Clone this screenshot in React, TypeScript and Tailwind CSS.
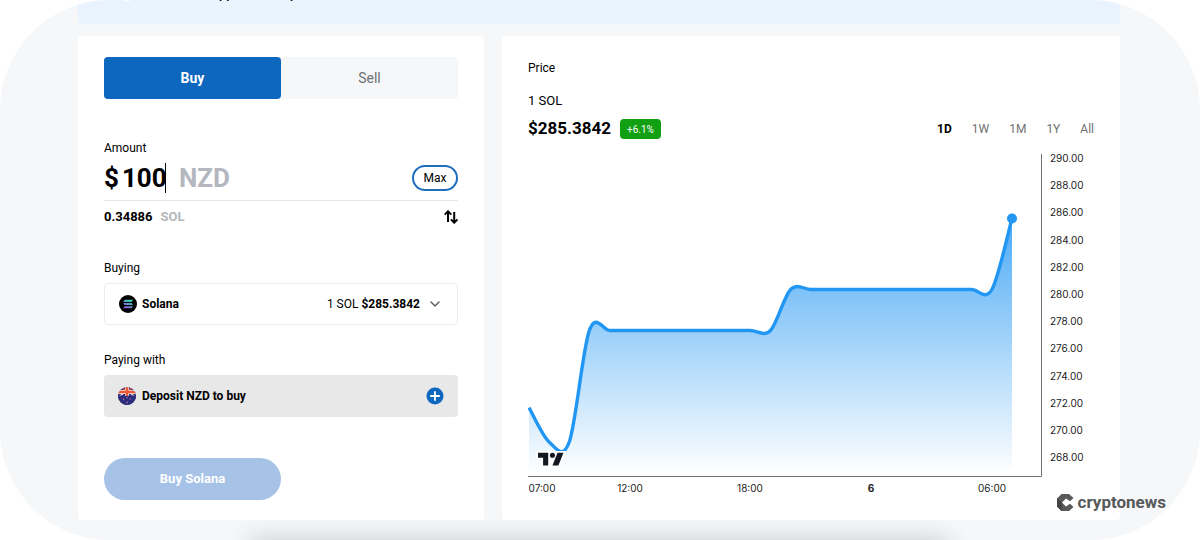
import React, { useState } from 'react';
import { ChevronDown } from 'lucide-react';

// Hourly SOL prices, oldest first
const PRICES: number[] = [
  271.65, 269.12, 269.12,
  ...Array(10).fill(277.32),
  ...Array(11).fill(280.33),
  285.55,
];

const TICKS = [290, 288, 286, 284, 282, 280, 278, 276, 274, 272, 270, 268];

const TIMES = [
  { label: '07:00', x: 14 },
  { label: '12:00', x: 102 },
  { label: '18:00', x: 222 },
  { label: '6', x: 343, bold: true },
  { label: '06:00', x: 464 },
];

const RANGES = ['1D', '1W', '1M', '1Y', 'All'];

const STEP = 20.125;
const priceY = (price: number) => 5 + (290 - price) * 13.6;
const points = PRICES.map((price, i) => ({ x: 1 + i * STEP, y: priceY(price) }));

// Smooth curve through the points, a sixth of the neighbour distance as tangent
const curve = points
  .map((p, i) => {
    if (i === 0) return `M${p.x} ${p.y}`;
    const prev = points[i - 1];
    const before = points[Math.max(i - 2, 0)];
    const after = points[Math.min(i + 1, points.length - 1)];
    const c1 = `${prev.x + (p.x - before.x) / 6} ${prev.y + (p.y - before.y) / 6}`;
    const c2 = `${p.x - (after.x - prev.x) / 6} ${p.y - (after.y - prev.y) / 6}`;
    return `C${c1} ${c2} ${p.x} ${p.y}`;
  })
  .join(' ');

const last = points[points.length - 1];

const SolanaIcon: React.FC = () => (
  <svg viewBox="0 0 18 18" className="size-[18px] shrink-0" aria-hidden="true">
    <defs>
      <linearGradient id="sol" x1="12" y1="4" x2="6" y2="14" gradientUnits="userSpaceOnUse">
        <stop offset="0" stopColor="#2ee6b0" />
        <stop offset="0.5" stopColor="#5b95c9" />
        <stop offset="1" stopColor="#a34be8" />
      </linearGradient>
    </defs>
    <circle cx="9" cy="9" r="9" fill="#000" />
    <path
      d="M5.6 4.8H14l-1.4 2.1H4.2zM4.2 8h8.4l1.4 2.1H5.6zM5.6 11.2H14l-1.4 2.1H4.2z"
      fill="url(#sol)"
    />
  </svg>
);

const FlagIcon: React.FC = () => (
  <svg viewBox="0 0 18 18" className="size-[18px] shrink-0" aria-hidden="true">
    <defs>
      <clipPath id="flag">
        <circle cx="9" cy="9" r="9" />
      </clipPath>
    </defs>
    <g clipPath="url(#flag)">
      <path d="M0 0h18v18H0z" fill="#2b2c7c" />
      <path d="M1 10L9 3l8 7" fill="none" stroke="#f3d9dc" strokeWidth="1.6" />
      <path d="M3 0l6 5 6-5" fill="none" stroke="#e2553f" strokeWidth="1.4" />
      <path d="M9 0v9M0 5h18" stroke="#f3e3e3" strokeWidth="4" />
      <path d="M9 0v9M0 5h18" stroke="#ea5a36" strokeWidth="2.6" />
      <path d="M0 8.5h7.2v1H18V18H0zM10.8 8.5H18v1h-7.2z" fill="#2b2c7c" />
      <g fill="#a46aa0">
        <circle cx="9" cy="10.8" r="0.8" />
        <circle cx="5.6" cy="12.4" r="0.8" />
        <circle cx="12.2" cy="12" r="0.8" />
        <circle cx="9" cy="15.4" r="0.9" />
      </g>
    </g>
  </svg>
);

const PriceChart: React.FC = () => (
  <svg viewBox="0 0 566 344" className="mt-[9px] block w-full" role="img" aria-label="SOL price, one day">
    <defs>
      <linearGradient id="area" x1="0" y1="66" x2="0" y2="322" gradientUnits="userSpaceOnUse">
        <stop offset="0" stopColor="#2196f3" stopOpacity="0.8" />
        <stop offset="1" stopColor="#2196f3" stopOpacity="0" />
      </linearGradient>
    </defs>
    <path d={`${curve} V322 H1 Z`} fill="url(#area)" />
    <path d={curve} fill="none" stroke="#2196f3" strokeWidth="3.4" />
    <circle cx={last.x} cy={last.y} r="5" fill="#2196f3" />

    <g transform="translate(8.3 298) scale(0.85)">
      <path
        d="M2 0H0v10h6v9h21.4l.5-1.3 6-15 1-2.7H23.7l-.5 1.3-.2.6a5 5 0 0 0-7-.9V0H2z"
        fill="#fff"
      />
      <path
        d="M14 2H2v6h6v9h6V2zm12 15h-7l6-15h7l-6 15zm-7-9a3 3 0 1 0 0-6 3 3 0 0 0 0 6z"
        fill="#131722"
      />
    </g>

    <path d="M0 323.5H513.5V1" fill="none" stroke="#6f7173" />

    <g className="fill-[#222] font-['Inter',sans-serif] text-[10px]">
      {TICKS.map((tick) => (
        <text key={tick} x="522" y={priceY(tick) + 4}>
          {tick.toFixed(2)}
        </text>
      ))}
      {TIMES.map((t) => (
        <text key={t.label} x={t.x} y="339" textAnchor="middle" className={t.bold ? 'font-bold' : ''}>
          {t.label}
        </text>
      ))}
    </g>
  </svg>
);

const OrderForm: React.FC = () => {
  const [amount, setAmount] = useState('100');

  return (
    <form className="rounded-sm bg-white px-[26px] pt-[21px] pb-5" onSubmit={(e) => e.preventDefault()}>
      {/* Buy / Sell */}
      <div className="grid h-[42px] grid-cols-2 rounded bg-[#f6f7f9] text-sm">
        <button type="button" className="rounded bg-[#0d67bf] font-bold text-white">
          Buy
        </button>
        <button type="button" className="text-[#6f7173]">
          Sell
        </button>
      </div>

      {/* Amount */}
      <label htmlFor="amount" className="mt-[41px] block text-xs leading-4">
        Amount
      </label>
      <div className="flex h-[45px] items-center border-b border-[#e6e7e9] text-[26px] font-bold">
        <span className="mr-[3px]">$</span>
        <div className="flex items-center border-r border-black">
          <input
            id="amount"
            value={amount}
            onChange={(e) => setAmount(e.target.value)}
            className="h-[30px] w-[43px] outline-none"
          />
        </div>
        <span className="ml-[13px] text-[#b5b7c0]">NZD</span>
        <button
          type="button"
          className="ml-auto h-[26px] w-[46px] rounded-full border-2 border-[#1f6fbf] text-xs font-normal"
        >
          Max
        </button>
      </div>
      <div className="flex h-8 items-center text-[13px] font-bold">
        <span>0.34886</span>
        <span className="ml-2 text-[#b5b7bb]">SOL</span>
        <button type="button" aria-label="Swap currencies" className="ml-auto">
          <svg viewBox="0 0 14 14" className="size-[14px]" fill="none" stroke="#000" strokeWidth="2">
            <path d="M0.7 4.6L4 1.3l3.3 3.3M4 1.5V12M6.9 9.4l3.3 3.3 3.3-3.3M10.2 12.5V2" />
          </svg>
        </button>
      </div>

      {/* Asset */}
      <div id="buying" className="mt-[27px] text-xs leading-4">
        Buying
      </div>
      <button
        type="button"
        aria-labelledby="buying"
        className="mt-[7px] flex h-[42px] w-full items-center rounded border border-[#ececee] px-[14px] text-xs"
      >
        <SolanaIcon />
        <span className="ml-[5px] font-bold">Solana</span>
        <span className="ml-auto">
          1 SOL <b>$285.3842</b>
        </span>
        <ChevronDown className="ml-[7px] size-4 text-[#55575a]" />
      </button>

      {/* Funding source */}
      <div id="paying" className="mt-[27px] text-xs leading-4">
        Paying with
      </div>
      <button
        type="button"
        aria-labelledby="paying"
        className="mt-[7px] flex h-[42px] w-full items-center rounded bg-[#e8e8e9] px-[14px] text-xs font-bold"
      >
        <FlagIcon />
        <span className="ml-1.5">Deposit NZD to buy</span>
        <svg viewBox="0 0 18 18" className="ml-auto size-[18px]" aria-hidden="true">
          <circle cx="9" cy="9" r="8.5" fill="#0d67bf" />
          <path d="M9 4.2v9.6M4.2 9h9.6" stroke="#fff" strokeWidth="1.8" />
        </svg>
      </button>

      <button
        type="submit"
        className="mt-[41px] h-[42px] w-1/2 rounded-full bg-[#a6c2e7] text-[13px] font-bold text-white"
      >
        Buy Solana
      </button>
    </form>
  );
};

const PricePanel: React.FC = () => (
  <section className="rounded-sm bg-white px-[26px] pt-6">
    <h2 className="text-xs leading-4">Price</h2>
    <div className="mt-4 text-[13px] leading-[18px]">1 SOL</div>
    <div className="mt-1 flex h-[30px] items-center">
      <span className="text-[17px] font-bold">$285.3842</span>
      <span className="ml-[9px] flex h-5 items-center rounded bg-[#11a011] px-[7px] text-[10px] text-white">
        +6.1%
      </span>
      <div className="ml-auto flex gap-5 text-xs text-[#6f7173]">
        {RANGES.map((range) => (
          <button key={range} type="button" className={range === '1D' ? 'font-bold text-black' : ''}>
            {range}
          </button>
        ))}
      </div>
    </div>
    <PriceChart />
  </section>
);

const App: React.FC = () => (
  <div className="bg-white">
    <div className="relative overflow-hidden rounded-[110px] bg-[#f6f7f9] pr-20 pl-[78px] font-['Roboto',sans-serif] text-black">
      {/* Notice bar */}
      <div className="flex h-6 items-start rounded-b bg-[#e9f4ff] pl-10">
        <span className="-mt-[17px] size-[18px] rounded-full bg-white" />
        <p className="-mt-4 ml-1 text-[13px] leading-5 font-medium">Trade in the app and set up</p>
      </div>

      <main className="mt-3 grid grid-cols-[406fr_618fr] gap-[18px]">
        <OrderForm />
        <PricePanel />
      </main>

      {/* Shadow of the sheet below */}
      <div className="flex h-5 justify-center overflow-hidden">
        <div className="mt-6 h-5 w-[66%] shadow-[0_0_24px_6px_rgba(0,0,0,0.16)]" />
      </div>

      <div className="absolute right-[34px] bottom-[26px] flex items-center gap-1 text-[#58595b]">
        <svg viewBox="0 0 17 17" className="size-[17px]" aria-hidden="true">
          <path
            d="M4.5 0H12l4.5 4L13 7.2 9 4.6 5 8.5 9 12.4l4-2.6 3.5 3.2-4.5 4H4.5L0 12.5v-8z"
            fill="#58595b"
          />
          <path d="M0 4.5l5 4L4.5 17 0 12.5z" fill="#444" />
        </svg>
        <span className="text-[17px] leading-6 font-bold">cryptonews</span>
      </div>
    </div>
  </div>
);

export default App;
